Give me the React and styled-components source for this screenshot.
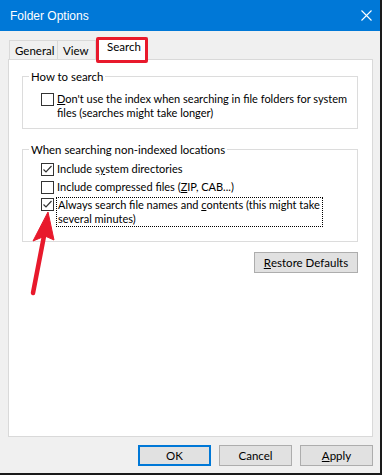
import React from "react";
import styled, { createGlobalStyle } from "styled-components";

const GlobalStyle = createGlobalStyle`
  html, body {
    margin: 0;
    padding: 0;
    background: #ffffff;
  }
  * {
    box-sizing: border-box;
  }
`;

const Window = styled.div`
  position: relative;
  width: 382px;
  height: 475px;
  background: #f0f0f0;
  border-right: 2px solid #1a1a1a;
  border-bottom: 2px solid #1a1a1a;
  display: flex;
  flex-direction: column;
  font-family: Lato, "Liberation Sans", Arial, sans-serif;
  font-size: 11px;
  color: #000;
`;

const TitleBar = styled.div`
  height: 31px;
  background: #0078d7;
  color: #fff;
  display: flex;
  align-items: center;
  justify-content: space-between;
  padding: 0 8px 0 10px;
  font-family: "Liberation Sans", Arial, sans-serif;
  font-size: 12px;
`;

const Body = styled.div`
  flex: 1;
  display: flex;
  flex-direction: column;
  padding: 6px 7px 0 8px;
`;

const TabStrip = styled.div`
  display: flex;
  align-items: flex-end;
  height: 22px;
  padding-left: 1px;
`;

const Tab = styled.div`
  position: relative;
  width: ${({ w }) => w}px;
  height: ${({ active }) => (active ? "23px" : "19px")};
  margin-left: ${({ active }) => (active ? "2px" : "-1px")};
  margin-bottom: ${({ active }) => (active ? "-1px" : "0")};
  z-index: ${({ active }) => (active ? 2 : 1)};
  background: ${({ active }) => (active ? "#fff" : "#f0f0f0")};
  border: 1px solid #d9d9d9;
  border-bottom: none;
  padding: ${({ active }) => (active ? "2px 0 0 8px" : "3px 0 0 5px")};
  line-height: 14px;
  font-size: 11.5px;
  white-space: nowrap;

  &:first-child {
    margin-left: 0;
  }
`;

const Panel = styled.div`
  height: 378px;
  background: #fff;
  border: 1px solid #d9d9d9;
  padding: 9px 14px 0 13px;
  display: flex;
  flex-direction: column;
`;

const Group = styled.fieldset`
  margin: 0 0 ${({ gap }) => gap || 0}px 0;
  padding: 0;
  border: 1px solid #dcdcdc;
  min-inline-size: 0;
`;

const Legend = styled.legend`
  margin-left: 6px;
  padding: 0 2px;
  line-height: 15px;
  font-size: 11.4px;
`;

const GroupBody = styled.div`
  display: flex;
  flex-direction: column;
  gap: ${({ gap }) => gap || 0}px;
  padding: ${({ pad }) => pad};
`;

const CheckRow = styled.div`
  display: flex;
  align-items: flex-start;
`;

const Box = styled.span`
  flex: none;
  width: 13px;
  height: 13px;
  margin-top: 1px;
  margin-right: ${({ focused }) => (focused ? "2px" : "3px")};
  border: 1px solid #333;
  background: #fff;
  display: flex;
  align-items: center;
  justify-content: center;
`;

const Label = styled.span`
  line-height: 14px;
  white-space: nowrap;
  border: ${({ focused }) => (focused ? "1px dotted #000" : "none")};
  padding: ${({ focused }) => (focused ? "0 2px 0 1px" : "0")};
`;

const U = styled.span`
  text-decoration: underline;
  text-underline-offset: 1px;
`;

const RestoreRow = styled.div`
  display: flex;
  justify-content: flex-end;
  margin-top: 10px;
`;

const Button = styled.div`
  width: ${({ w }) => w || 73}px;
  height: 21px;
  background: #e1e1e1;
  border: ${({ primary }) => (primary ? "2px solid #0078d7" : "1px solid #adadad")};
  display: flex;
  align-items: center;
  justify-content: center;
  font-size: 11.5px;
`;

const ButtonRow = styled.div`
  display: flex;
  justify-content: flex-end;
  gap: 8px;
  margin-top: 8px;
`;

const Highlight = styled.div`
  position: absolute;
  left: 96px;
  top: 37px;
  width: 52px;
  height: 26px;
  border: 3px solid #e8192c;
  border-radius: 2px;
  z-index: 5;
`;

const ArrowLayer = styled.svg`
  position: absolute;
  left: 0;
  top: 0;
  z-index: 5;
  pointer-events: none;
`;

const Check = () => (
  <svg width="11" height="11" viewBox="0 0 11 11">
    <path d="M1.5 5.5 L4 8 L9.5 2" fill="none" stroke="#333" strokeWidth="1.2" />
  </svg>
);

const CloseIcon = () => (
  <svg width="11" height="11" viewBox="0 0 11 11">
    <path d="M0.5 0.5 L10.5 10.5 M10.5 0.5 L0.5 10.5" stroke="#fff" strokeWidth="1.1" />
  </svg>
);

const Option = ({ checked, focused, children }) => (
  <CheckRow>
    <Box focused={focused}>{checked && <Check />}</Box>
    <Label focused={focused}>{children}</Label>
  </CheckRow>
);

export default function App() {
  return (
    <>
      <GlobalStyle />
      <Window>
        <TitleBar>
          <span>Folder Options</span>
          <CloseIcon />
        </TitleBar>
        <Body>
          <TabStrip>
            <Tab w={49}>General</Tab>
            <Tab w={39}>View</Tab>
            <Tab w={50} active>
              Search
            </Tab>
          </TabStrip>
          <Panel>
            <Group gap={13}>
              <Legend>How to search</Legend>
              <GroupBody pad="8px 0 8px 18px">
                <Option>
                  <U>D</U>on't use the index when searching in file folders for system
                  <br />
                  files (searches might take longer)
                </Option>
              </GroupBody>
            </Group>
            <Group>
              <Legend>When searching non-indexed locations</Legend>
              <GroupBody pad="5px 0 14px 18px" gap={3.5}>
                <Option checked>
                  Include s<U>y</U>stem directories
                </Option>
                <Option>
                  Include compressed files (<U>Z</U>IP, CAB...)
                </Option>
                <Option checked focused>
                  Always search file names and <U>c</U>ontents (this might take
                  <br />
                  several minutes)
                </Option>
              </GroupBody>
            </Group>
            <RestoreRow>
              <Button w={104}>
                <U>R</U>estore Defaults
              </Button>
            </RestoreRow>
          </Panel>
          <ButtonRow>
            <Button primary>OK</Button>
            <Button>Cancel</Button>
            <Button>
              <U>A</U>pply
            </Button>
          </ButtonRow>
        </Body>
        <Highlight />
        <ArrowLayer width="382" height="475" viewBox="0 0 382 475">
          <path d="M33 293 L44 236" stroke="#e8192c" strokeWidth="4.5" strokeLinecap="round" />
          <path d="M48 212 L54 240 L45 236 L33 241 Z" fill="#e8192c" stroke="#e8192c" strokeWidth="1" strokeLinejoin="round" />
        </ArrowLayer>
      </Window>
    </>
  );
}
